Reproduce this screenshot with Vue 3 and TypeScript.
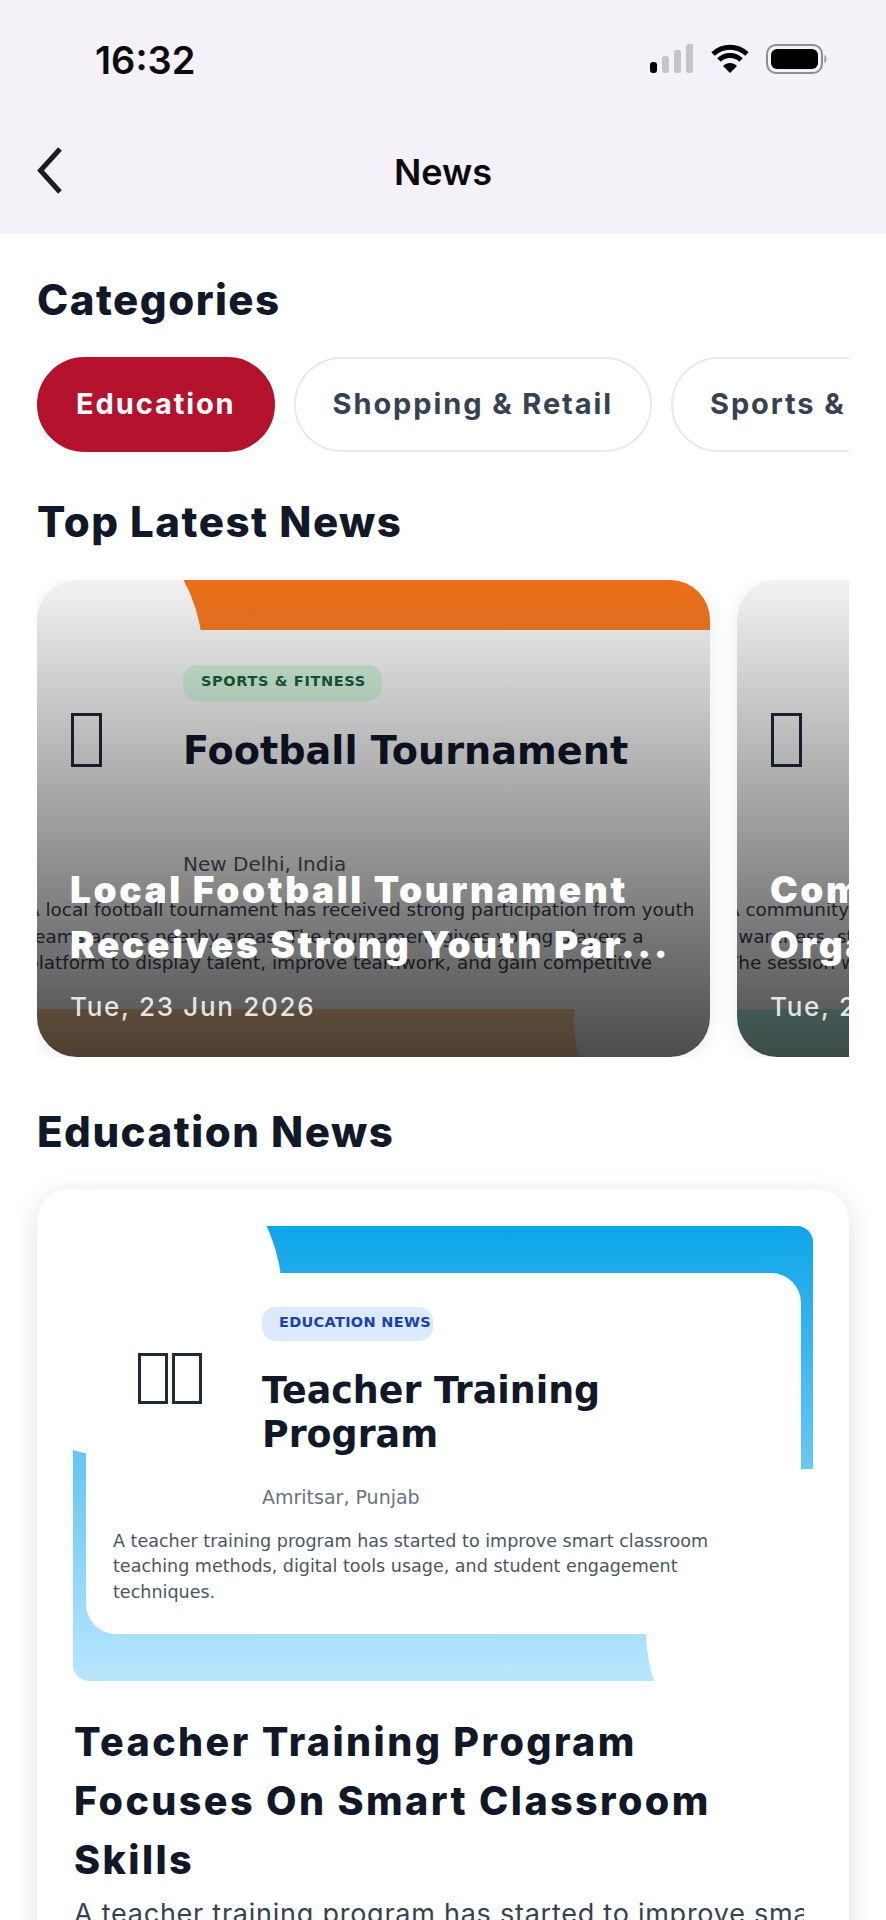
<template>
  <div class="screen">
    <header class="top-bar">
      <div class="status-bar">
        <span class="clock">16:32</span>
        <div class="status-icons">
          <svg width="44" height="30" viewBox="0 0 44 30">
            <rect x="0" y="18" width="7" height="11" rx="3" fill="#000" />
            <rect x="12" y="12" width="7" height="17" rx="2.5" fill="#c6c4cb" />
            <rect x="24" y="6" width="7" height="23" rx="2.5" fill="#c6c4cb" />
            <rect x="36" y="0" width="7" height="29" rx="2.5" fill="#c6c4cb" />
          </svg>
          <svg width="38" height="30" viewBox="0 0 38 30">
            <path d="M2 10 C12 1 26 1 36 10" fill="none" stroke="#000" stroke-width="5" />
            <path d="M8 16 C14 10 24 10 30 16" fill="none" stroke="#000" stroke-width="5" />
            <path d="M19 29 L12 22 C16 18 22 18 26 22 Z" fill="#000" />
          </svg>
          <svg width="62" height="30" viewBox="0 0 62 30">
            <rect x="1" y="1" width="55" height="28" rx="9" fill="none" stroke="#8e8d92" stroke-width="2" />
            <rect x="5" y="5" width="47" height="20" rx="6" fill="#000" />
            <path d="M58.5 11 C61 12 61 18 58.5 19 Z" fill="#8e8d92" />
          </svg>
        </div>
      </div>
      <div class="nav-bar">
        <svg class="back" width="28" height="48" viewBox="0 0 28 48">
          <path d="M25 2 L5.5 23.5 L25 45" fill="none" stroke="#1c1c22" stroke-width="5" />
        </svg>
        <span class="nav-title">News</span>
      </div>
    </header>

    <main class="content">
      <h2 class="section-title">Categories</h2>
      <div class="chips">
        <span v-for="(c, i) in categories" :key="c" class="chip" :class="{ active: i === 0 }">{{ c }}</span>
      </div>

      <h2 class="section-title latest-title">Top Latest News</h2>
      <div class="top-scroller">
        <article v-for="item in topNews" :key="item.title" class="top-card">
          <span class="band" :class="item.tone"></span>
          <span class="blob blob-a"></span>
          <span class="blob blob-b"></span>
          <div class="top-inner">
            <div class="top-row">
              <div class="tofu-col"><span class="tofu"></span></div>
              <div class="top-text">
                <span class="badge top-badge">{{ item.badge }}</span>
                <h3 class="poster-title">{{ item.poster }}</h3>
                <p class="place">{{ item.place }}</p>
              </div>
            </div>
            <p class="top-desc">{{ item.desc }}</p>
          </div>
          <div class="shade"></div>
          <div class="caption">
            <h3 class="caption-title">{{ item.title }}</h3>
            <p class="caption-date">{{ item.date }}</p>
          </div>
        </article>
      </div>

      <h2 class="section-title edu-title">Education News</h2>
      <article class="edu-card">
        <div class="edu-banner">
          <span class="band sky"></span>
          <span class="edu-blob edu-blob-a"></span>
          <span class="edu-blob edu-blob-b"></span>
          <div class="edu-inner">
            <div class="edu-row">
              <div class="edu-tofus"><span class="tofu small"></span><span class="tofu small"></span></div>
              <div class="edu-text">
                <span class="badge edu-badge">EDUCATION NEWS</span>
                <h3 class="edu-poster">Teacher Training Program</h3>
                <p class="edu-place">Amritsar, Punjab</p>
              </div>
            </div>
            <p class="edu-desc">
              A teacher training program has started to improve smart classroom teaching methods, digital tools usage, and student engagement techniques.
            </p>
          </div>
        </div>
        <h3 class="edu-heading">Teacher Training Program Focuses On Smart Classroom Skills</h3>
        <p class="edu-summary">A teacher training program has started to improve smart classroom teaching methods</p>
      </article>
    </main>
  </div>
</template>

<script setup lang="ts">
interface TopNews {
  tone: string
  badge: string
  poster: string
  place: string
  desc: string
  title: string
  date: string
}

const categories: string[] = ['Education', 'Shopping & Retail', 'Sports & Fitness']

const topNews: TopNews[] = [
  {
    tone: 'orange',
    badge: 'SPORTS & FITNESS',
    poster: 'Football Tournament',
    place: 'New Delhi, India',
    desc: 'A local football tournament has received strong participation from youth teams across nearby areas. The tournament gives young players a platform to display talent, improve teamwork, and gain competitive',
    title: 'Local Football Tournament Receives Strong Youth Par...',
    date: 'Tue, 23 Jun 2026'
  },
  {
    tone: 'teal',
    badge: 'COMMUNITY',
    poster: 'Outreach Program',
    place: 'Pune, India',
    desc: 'A community outreach program was held in the city to spread public awareness, strengthen local ties, and support families in need of care. The session was attended by many local residents and volunteers.',
    title: 'Community Health Camp Organized For Families',
    date: 'Tue, 23 Jun 2026'
  }
]
</script>

<style>
html,
body {
  margin: 0;
  background: #fff;
}
</style>

<style scoped>
.screen {
  width: 886px;
  height: 1920px;
  overflow: hidden;
  background: #fff;
  font-family: Inter, "Liberation Sans", sans-serif;
}

.top-bar {
  height: 234px;
  background: #f4f1f9;
}

.status-bar {
  height: 117px;
  padding: 40px 58px 0 95px;
  box-sizing: border-box;
  display: flex;
  justify-content: space-between;
  align-items: flex-start;
}

.clock {
  font-size: 38px;
  line-height: 40px;
  font-weight: 600;
  color: #0b0b0f;
}

.status-icons {
  display: flex;
  align-items: center;
  gap: 17px;
  margin-top: 4px;
}

.nav-bar {
  position: relative;
  height: 110px;
  display: flex;
  align-items: center;
  justify-content: center;
}

.back {
  position: absolute;
  left: 35px;
  top: 30px;
}

.nav-title {
  font-size: 36px;
  font-weight: 600;
  color: #0b0b0f;
}

.content {
  padding: 42px 37px 0;
}

.section-title {
  margin: 0;
  font-size: 42px;
  line-height: 48px;
  font-weight: 800;
  color: #111827;
  letter-spacing: 1.5px;
}

.chips {
  display: flex;
  gap: 19px;
  margin-top: 33px;
  overflow: hidden;
}

.chip {
  flex-shrink: 0;
  height: 95px;
  padding: 0 37px 2px;
  box-sizing: border-box;
  display: flex;
  align-items: center;
  border: 2px solid #e8e9ee;
  border-radius: 48px;
  font-size: 29px;
  font-weight: 700;
  color: #374151;
  background: #fff;
  letter-spacing: 1.9px;
}

.chip.active {
  background: #b5122d;
  border-color: #b5122d;
  color: #fff;
}

.latest-title {
  margin-top: 46px;
}

.top-scroller {
  display: flex;
  gap: 27px;
  margin-top: 34px;
  overflow: hidden;
}

.top-card {
  position: relative;
  flex-shrink: 0;
  width: 673px;
  height: 477px;
  border-radius: 40px;
  overflow: hidden;
  box-shadow: 0 4px 20px rgba(0, 0, 0, 0.08);
}

.band {
  position: absolute;
  inset: 0;
  clip-path: polygon(20% 0, 100% 0, 100% 70%, 85% 100%, 0 100%, 0 40%);
}

.band.orange {
  background: linear-gradient(180deg, #f97316, #fed7aa);
}

.band.teal {
  background: linear-gradient(180deg, #14b8a6, #ccfbf1);
}

.band.sky {
  background: linear-gradient(180deg, #0ea5e9, #bae6fd);
}

.blob {
  position: absolute;
  width: 324px;
  height: 324px;
  border-radius: 50%;
  background: #fff;
}

.blob-a {
  left: -158px;
  top: -85px;
}

.blob-b {
  left: 537px;
  top: 275px;
}

.top-inner {
  position: relative;
  margin-top: 50px;
  height: 379px;
  background: #fff;
  padding-top: 35px;
  box-sizing: border-box;
}

.top-row {
  display: flex;
  align-items: flex-start;
}

.tofu-col {
  width: 146px;
  padding-left: 34px;
  padding-top: 48px;
  box-sizing: border-box;
}

.tofu {
  display: block;
  width: 25px;
  height: 48px;
  border: 3px solid #1f2937;
}

.tofu.small {
  width: 24px;
  height: 45px;
}

.top-text {
  flex: 1;
}

.badge {
  display: inline-block;
  height: 36px;
  line-height: 32px;
  padding: 0 18px;
  border-radius: 14px;
  font-family: "DejaVu Sans", sans-serif;
  font-size: 14.5px;
  font-weight: 700;
  white-space: nowrap;
}

.top-badge {
  background: #dcfce7;
  color: #166534;
  letter-spacing: 0.65px;
  padding: 0 16px 0 18px;
}

.poster-title {
  margin: 27px 0 0;
  font-family: "DejaVu Sans", sans-serif;
  font-size: 38.2px;
  line-height: 46px;
  font-weight: 700;
  color: #0f172a;
  white-space: nowrap;
}

.place {
  margin: 78px 0 0;
  font-family: "DejaVu Sans", sans-serif;
  font-size: 20px;
  line-height: 24px;
  color: #4b5563;
}

.top-desc {
  margin: 21px 0 0 -10px;
  width: 680px;
  font-family: "DejaVu Sans", sans-serif;
  font-size: 18.4px;
  line-height: 26.6px;
  color: #374151;
}

.shade {
  position: absolute;
  inset: 0;
  background: linear-gradient(180deg, rgba(0, 0, 0, 0.05), rgba(0, 0, 0, 0.7));
}

.caption {
  position: absolute;
  left: 33px;
  width: 610px;
  bottom: 33px;
}

.caption-title {
  margin: 0;
  font-size: 37px;
  line-height: 55px;
  font-weight: 900;
  color: #fff;
  letter-spacing: 2.6px;
}

.caption-date {
  margin: 18px 0 0;
  font-size: 26px;
  line-height: 34px;
  font-weight: 500;
  color: rgba(255, 255, 255, 0.85);
  letter-spacing: 1.7px;
}

.edu-title {
  margin-top: 51px;
}

.edu-card {
  margin-top: 33px;
  padding: 37px 36px 120px;
  border-radius: 32px;
  background: #fff;
  box-shadow: 0 6px 28px rgba(0, 0, 0, 0.12);
}

.edu-banner {
  position: relative;
  height: 455px;
  border-radius: 16px;
  overflow: hidden;
  padding: 47px 12px 0 13px;
  box-sizing: border-box;
}

.edu-blob {
  position: absolute;
  width: 324px;
  height: 324px;
  border-radius: 50%;
  background: #fff;
}

.edu-blob-a {
  left: -115px;
  top: -93px;
}

.edu-blob-b {
  left: 573px;
  top: 243px;
}

.edu-inner {
  position: relative;
  height: 361px;
  border-radius: 30px;
  background: #fff;
  padding: 34px 27px 0;
  box-sizing: border-box;
}

.edu-row {
  display: flex;
  align-items: flex-start;
}

.edu-tofus {
  width: 149px;
  padding: 46px 0 0 25px;
  box-sizing: border-box;
  display: flex;
  gap: 4px;
}

.edu-text {
  flex: 1;
}

.edu-badge {
  height: 34px;
  line-height: 31px;
  padding: 0 2px 0 17px;
  background: #dbeafe;
  color: #1e40af;
  letter-spacing: 0.3px;
}

.edu-poster {
  margin: 28px 0 0;
  width: 400px;
  font-family: "DejaVu Sans", sans-serif;
  font-size: 36.4px;
  line-height: 44px;
  font-weight: 700;
  color: #111827;
}

.edu-place {
  margin: 28px 0 0;
  font-family: "DejaVu Sans", sans-serif;
  font-size: 19px;
  line-height: 24px;
  color: #6b7280;
}

.edu-desc {
  margin: 20px 0 0;
  width: 640px;
  font-family: "DejaVu Sans", sans-serif;
  font-size: 17.55px;
  line-height: 25.4px;
  color: #4b5563;
}

.edu-heading {
  margin: 32px 0 0 1px;
  font-size: 39.5px;
  line-height: 59px;
  font-weight: 800;
  color: #111827;
  letter-spacing: 2.4px;
}

.edu-summary {
  margin: 4px 9px 0 1px;
  font-size: 27px;
  line-height: 40px;
  color: #374151;
  letter-spacing: 0.75px;
  white-space: nowrap;
  overflow: hidden;
}
</style>
